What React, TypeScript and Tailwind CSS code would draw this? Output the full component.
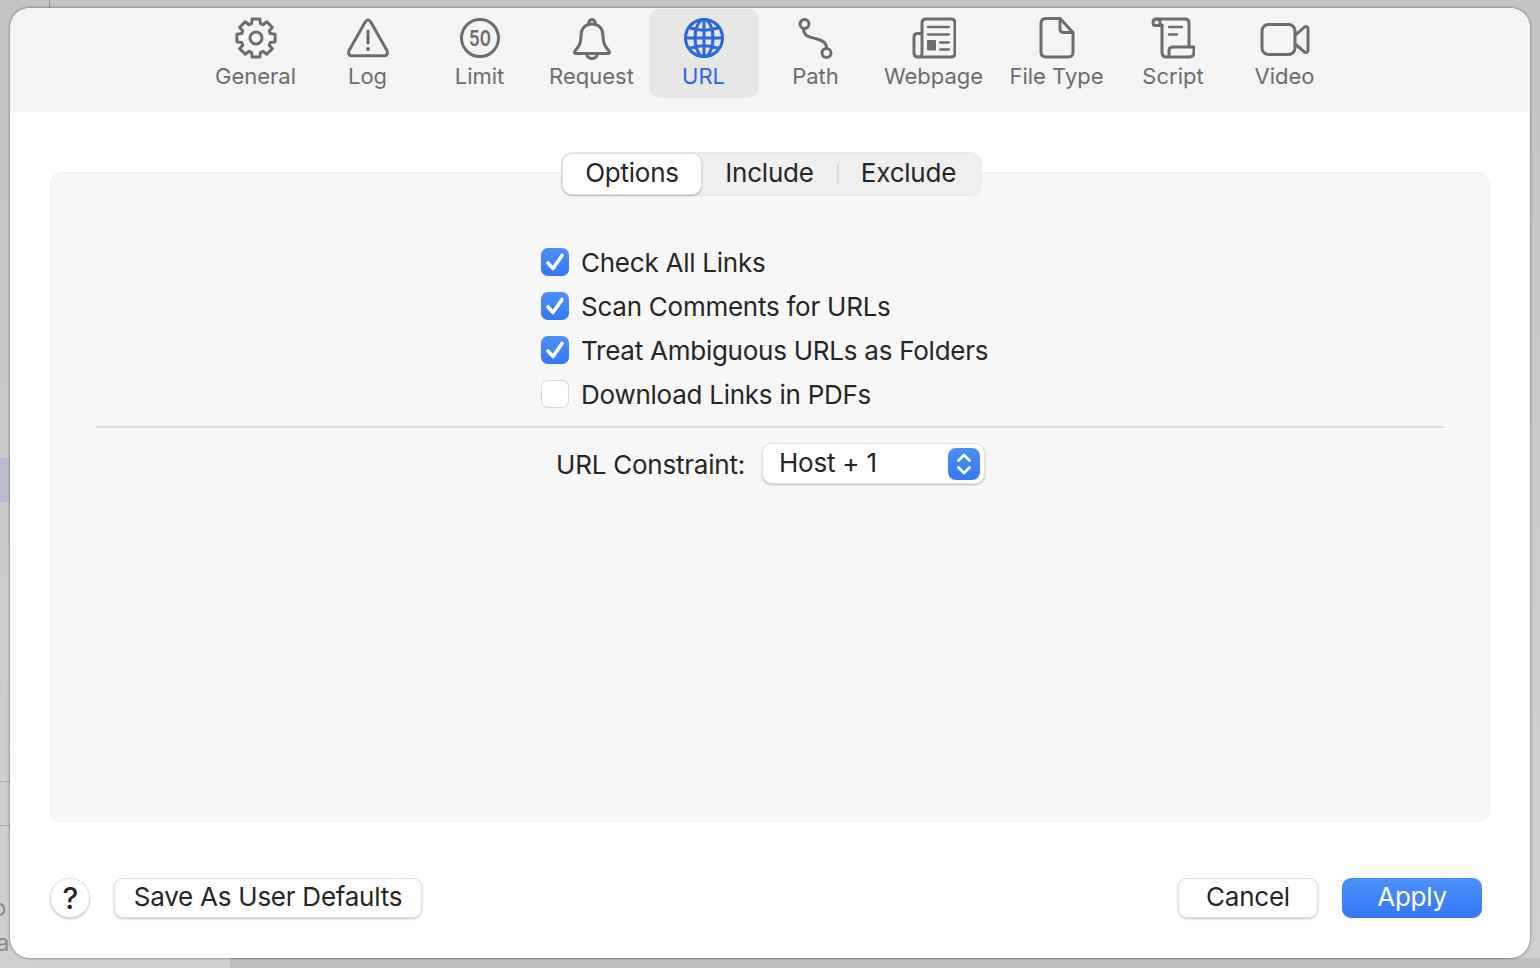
import type { ReactNode } from 'react'

const FONT = "font-['Inter','Noto_Sans',sans-serif]"
const GRAY = '#6d6d6d'
const BLUE = '#2b66e3'

/** Eight-tooth gear outline, built once from polar points */
function gearPath(cx: number, cy: number) {
  const pts: string[] = []
  for (let i = 0; i < 8; i++) {
    const a = (i * Math.PI) / 4 - Math.PI / 2
    const step = 0.2
    const add = (r: number, t: number) =>
      pts.push(`${(cx + r * Math.cos(t)).toFixed(2)} ${(cy + r * Math.sin(t)).toFixed(2)}`)
    add(15, a - 0.3)
    add(19.5, a - step)
    add(19.5, a + step)
    add(15, a + 0.3)
  }
  return `M${pts.join('L')}Z`
}

function IconBox({ children, color = GRAY, width = 44 }: { children: ReactNode; color?: string; width?: number }) {
  return (
    <svg
      width={width}
      height={44}
      viewBox={`0 0 ${width} 44`}
      fill="none"
      stroke={color}
      strokeWidth={3}
      strokeLinecap="round"
      strokeLinejoin="round"
    >
      {children}
    </svg>
  )
}

const toolbarItems: { label: string; width: string; icon: ReactNode }[] = [
  {
    label: 'General',
    width: 'w-[112px]',
    icon: (
      <IconBox>
        <path d={gearPath(22, 22)} />
        <circle cx="22" cy="22" r="6" />
      </IconBox>
    ),
  },
  {
    label: 'Log',
    width: 'w-[112px]',
    icon: (
      <IconBox>
        <path d="M19.2 6 3.2 34.2Q1.2 39.5 6 39.8H38Q42.8 39.5 40.8 34.2L24.8 6Q22 1.8 19.2 6Z" />
        <path d="M22 15V27" strokeWidth={3} />
        <circle cx="22" cy="33" r="1.3" fill={GRAY} strokeWidth={1.2} />
      </IconBox>
    ),
  },
  {
    label: 'Limit',
    width: 'w-[112px]',
    icon: (
      <IconBox>
        <circle cx="22" cy="22" r="18.5" />
        <text
          x="22"
          y="30"
          textAnchor="middle"
          fontFamily="Inter, sans-serif"
          fontSize="22"
          fontWeight="600"
          fill={GRAY}
          stroke="none"
          textLength="22"
          lengthAdjust="spacingAndGlyphs"
        >
          50
        </text>
      </IconBox>
    ),
  },
  {
    label: 'Request',
    width: 'w-[112px]',
    icon: (
      <IconBox>
        <path d="M22 8C14.500 8 11 13.500 11 20C11 28 8.500 30.500 5 35Q3.500 37.500 6.500 37.500H37.500Q40.500 37.500 39 35C35.500 30.500 33 28 33 20C33 13.500 29.500 8 22 8Z" />
        <path d="M18.700 8.500Q18.700 3.500 22 3.500Q25.300 3.500 25.300 8.500" />
        <path d="M16.500 38Q17.500 42.500 22 42.500Q26.500 42.500 27.500 38" />
      </IconBox>
    ),
  },
  {
    label: 'URL',
    width: 'w-[112px]',
    icon: (
      <IconBox color={BLUE}>
        <circle cx="22" cy="22" r="18.500" />
        <ellipse cx="22" cy="22" rx="9" ry="18.500" />
        <path d="M22 3.500V40.500M3.500 22H40.500M7 11.500Q22 17 37 11.500M7 32.500Q22 27 37 32.500" />
      </IconBox>
    ),
  },
  {
    label: 'Path',
    width: 'w-[112px]',
    icon: (
      <IconBox>
        <circle cx="10.500" cy="8" r="4.500" />
        <circle cx="32.500" cy="37" r="4.500" />
        <path d="M9.500 12.500C9.500 21 16.500 21 23 23C29 25 32.500 26.500 32.500 32.500" />
      </IconBox>
    ),
  },
  {
    label: 'Webpage',
    width: 'w-[124px]',
    icon: (
      <IconBox>
        <path d="M10 37V7Q10 3 14 3H39Q43 3 43 7V37Q43 41 39 41H6Q2 41 2 37V21Q2 17.500 5.500 17.500H10M10 37Q10 41 6 41" />
        <path d="M16 11H37M16 18.500H37M28 26.500H37M28 33.500H37" strokeWidth={2.300} />
        <rect x="15" y="24" width="9" height="10.500" rx="1" fill={GRAY} stroke="none" />
      </IconBox>
    ),
  },
  {
    label: 'File Type',
    width: 'w-[122px]',
    icon: (
      <IconBox>
        <path d="M11 2.500H25L38 16.500V36Q38 41 33 41H11Q6 41 6 36V7.500Q6 2.500 11 2.500Z" />
        <path d="M25 2.500V12.500Q25 16.500 29 16.500H38" />
      </IconBox>
    ),
  },
  {
    label: 'Script',
    width: 'w-[111px]',
    icon: (
      <IconBox>
        <path d="M6 3H34Q38 3 38 7V31M11 9V36.500Q11 41 15.500 41H38Q43 41 43 36V31H22Q18 31 18 35V41" />
        <path d="M11 9.500H4.500Q2 9.500 2 6.500Q2 3 5.500 3Q9 3 9 6V9" />
        <path d="M18 11H31M18 18.500H26" strokeWidth={2.300} />
      </IconBox>
    ),
  },
  {
    label: 'Video',
    width: 'w-[112px]',
    icon: (
      <IconBox width={50}>
        <rect x="2" y="8.500" width="33" height="30" rx="6.500" />
        <path d="M35 19.500 44.500 11Q48 9.500 48 13V34Q48 37.500 44.500 36L35 28" />
      </IconBox>
    ),
  },
]

function Toolbar() {
  return (
    <div className="flex h-[104px] shrink-0 justify-center bg-[#f4f4f4]">
      {toolbarItems.map((item) => {
        const active = item.label === 'URL'
        return (
          <div key={item.label} className={`${item.width} mt-[1px] flex h-[89px] flex-col items-center pt-[7px] ${active ? 'mx-[1px] !w-[110px] rounded-[11px] bg-[#e6e6e6]' : ''}`}>
            {item.icon}
            <span className={`mt-[2px] text-[22px] leading-[28px] ${active ? 'text-[#2b66e3]' : 'text-[#6d6d6d]'}`}>
              {item.label}
            </span>
          </div>
        )
      })}
    </div>
  )
}

function SegmentedTabs() {
  return (
    <div className="absolute left-[510px] top-[-21px] flex h-[44px] w-[421px] items-center rounded-[11px] border border-[#e8e8e8] bg-[#efefef] text-[26px] leading-[38px] tracking-[-0.22px] text-[#262626]">
      <div className="flex h-[42px] w-[140px] items-start justify-center rounded-[10px] border-[0.5px] border-[#e0e0e0] bg-white shadow-[0_1px_2px_rgba(0,0,0,0.25)]">
        Options
      </div>
      <div className="-mt-[2px] flex w-[135px] justify-center">Include</div>
      <div className="h-[22px] w-[2px] bg-[#dcdcdc]" />
      <div className="-mt-[2px] flex w-[139px] justify-center">Exclude</div>
    </div>
  )
}

function Checkbox({ label, checked }: { label: string; checked: boolean }) {
  return (
    <div className="flex h-[44px] items-center gap-[12px]">
      {checked ? (
        <div className="flex h-[28px] w-[28px] items-center justify-center rounded-[7px] bg-gradient-to-b from-[#4c90fb] to-[#3577f6]">
          <svg width="22" height="22" viewBox="0 0 22 22" fill="none" stroke="#fff" strokeWidth="3.600" strokeLinecap="round" strokeLinejoin="round">
            <path d="M4 12 9 17.500 18 4.500" />
          </svg>
        </div>
      ) : (
        <div className="h-[28px] w-[28px] rounded-[7px] border border-[#d8d8d8] bg-white" />
      )}
      <span className="text-[26px] tracking-[-0.25px] text-[#262626]">{label}</span>
    </div>
  )
}

function FooterButton({ children, className }: { children: ReactNode; className: string }) {
  return (
    <div className={`flex h-[40px] items-start justify-center rounded-[9px] border-[0.5px] border-[#e2e2e2] bg-white text-[26px] leading-[36px] tracking-[-0.25px] text-[#262626] shadow-[0_1px_2px_rgba(0,0,0,0.25)] ${className}`}>
      {children}
    </div>
  )
}

export default function App() {
  return (
    <div className={`${FONT} relative h-[968px] w-[1540px] overflow-hidden bg-gradient-to-b from-[#c4c4c4] to-[#d0d0d0] pl-[10px] pr-[10px] pt-[8px]`}>
      {/* Window behind the sheet */}
      <div className="absolute left-[49px] top-0 h-[8px] w-[1px] bg-[#8e8e8e]" />
      <div className="absolute left-0 top-[458px] h-[44px] w-[10px] bg-[#babdcd]" />
      <div className="absolute left-0 top-[781px] h-[1px] w-[10px] bg-[#a9a9a9]" />
      <div className="absolute left-0 top-[825px] h-[1px] w-[10px] bg-[#a9a9a9]" />
      <div className="absolute left-[-8px] top-[893px] text-[24px] leading-[30px] text-[#8a8a8a]">o</div>
      <div className="absolute left-[-4px] top-[928px] text-[24px] leading-[30px] text-[#8a8a8a]">a</div>
      <div className="absolute bottom-0 left-[230px] right-0 h-[10px] bg-[#bdbdbd]" />

      {/* Settings sheet */}
      <div className="relative flex h-[950px] w-[1520px] flex-col overflow-hidden rounded-[20px] bg-white shadow-[0_0_3px_rgba(0,0,0,0.55)]">
        <Toolbar />
        <div className="px-[40px] pt-[60px]">
          <div className="relative h-[650px] rounded-[12px] border border-[#eeeeee] bg-[#f7f7f7]">
            <SegmentedTabs />
            <div className="flex flex-col pl-[490px] pt-[67px]">
              <Checkbox label="Check All Links" checked />
              <Checkbox label="Scan Comments for URLs" checked />
              <Checkbox label="Treat Ambiguous URLs as Folders" checked />
              <Checkbox label="Download Links in PDFs" checked={false} />
            </div>
            <div className="mx-[45px] mt-[10px] h-[2px] bg-[#dedede]" />
            <div className="mt-[15px] flex items-center pl-[505px]">
              <span className="mt-[2px] w-[206px] text-[26px] tracking-[-0.22px] text-[#262626]">URL Constraint:</span>
              <div className="flex h-[41px] w-[223px] items-center justify-between rounded-[10px] border-[0.5px] border-[#e2e2e2] bg-white pl-[16px] pr-[4px] text-[26px] tracking-[-0.22px] text-[#262626] shadow-[0_1px_2px_rgba(0,0,0,0.25)]">
                <span className="-mt-[2px]">Host + 1</span>
                <div className="flex h-[32px] w-[32px] items-center justify-center rounded-[8px] bg-gradient-to-b from-[#4c90fb] to-[#3577f6]">
                  <svg width="20" height="28" viewBox="0 0 20 28" fill="none" stroke="#fff" strokeWidth="2.800" strokeLinecap="round" strokeLinejoin="round">
                    <path d="M4.500 10.500 10 5 15.500 10.500M4.500 17.500 10 23 15.500 17.500" />
                  </svg>
                </div>
              </div>
            </div>
          </div>
          <div className="flex items-center pt-[56px]">
            <div className="flex h-[40px] w-[40px] items-center justify-center rounded-full border-[0.5px] border-[#e2e2e2] bg-white pl-[1px] text-[30px] font-medium text-[#262626] shadow-[0_1px_2px_rgba(0,0,0,0.25)]">
              ?
            </div>
            <FooterButton className="ml-[24px] w-[308px]">Save As User Defaults</FooterButton>
            <FooterButton className="ml-auto w-[140px]">Cancel</FooterButton>
            <div className="ml-[24px] mr-[8px] flex h-[40px] w-[140px] items-start justify-center rounded-[9px] bg-gradient-to-b from-[#4c90fb] to-[#3577f6] text-[26px] leading-[38px] tracking-[-0.25px] text-white">
              Apply
            </div>
          </div>
        </div>
      </div>
    </div>
  )
}
